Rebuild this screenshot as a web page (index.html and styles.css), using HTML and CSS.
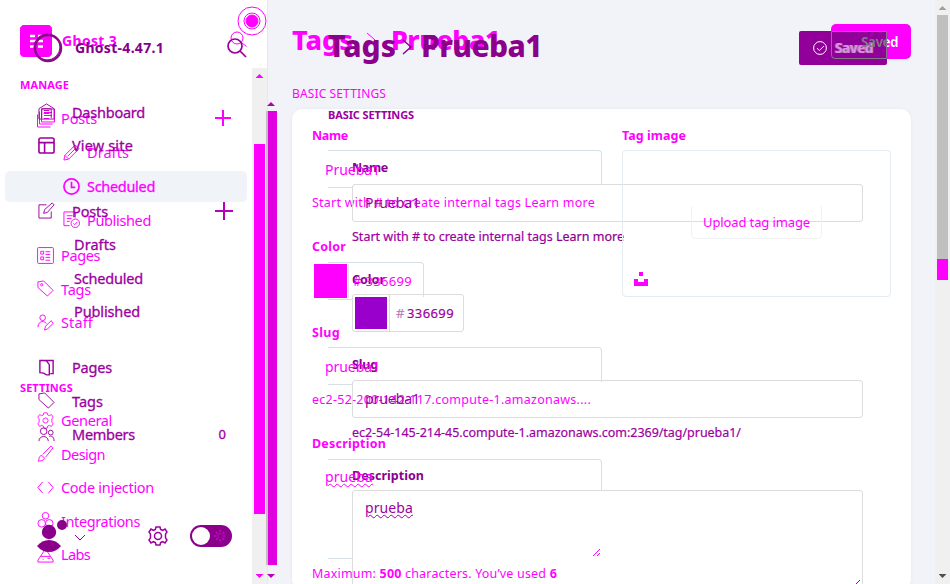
FILE: index.html
```html
<!DOCTYPE html>
<html lang="en">
<head>
<meta charset="utf-8">
<title>Tags - Prueba1</title>
<link rel="stylesheet" href="styles.css">
</head>
<body>
<div class="stage">
  <section class="layer old">
    <aside class="sidebar">
      <header class="brand">
        <svg class="logo" viewBox="0 0 32 32"><rect width="32" height="32" rx="5" fill="#f0f"/><path d="M10 11h5M18 11h5M10 16h13M10 21.500h6M18 21.500h5" stroke="#fff" stroke-width="2.500"/></svg>
        <b data-w="55">Ghost 3</b>
        <svg class="find" viewBox="0 0 20 20"><circle cx="8" cy="8" r="6"/><path d="M12.500 12.500l5 4"/></svg>
      </header>
      <div class="side-body">
        <nav class="nav-old">
          <h4 class="manage"><span data-w="49">MANAGE</span></h4>
          <a class="lead"><svg viewBox="0 0 18 20"><path d="M4.500 1.500h13v13h-13zM2.500 4v12.500h13M.5 7v12.500h13M7 5h8M7 8h8M7 11h5"/></svg><span data-w="36">Posts</span><i class="plus"></i></a>
          <a class="sub first"><svg viewBox="0 0 18 18"><path d="M1 17l1-5L13 1l4 4L6 16zM11 3l4 4M2 12l4 4M5 13l8-8"/></svg><span data-w="42">Drafts</span></a>
          <a class="sub current"><svg class="clock" viewBox="0 0 18 18"><circle cx="9" cy="9" r="8"/><path d="M9 4v6h4"/></svg><span data-w="68">Scheduled</span></a>
          <a class="sub"><svg viewBox="0 0 18 18"><path d="M7 15.500H1V1h12v6M4 5h6M4 8h5M4 11h3"/><circle cx="13" cy="13" r="4.500"/><path d="M11 13l1.500 1.500 2.500-3"/></svg><span data-w="64">Published</span></a>
          <a class="gap"><svg viewBox="0 0 18 18"><rect x=".6" y=".6" width="16.800" height="16.800" rx="1"/><path d="M4 4.500h3v3H4zM4 10.500h3v3H4zM9 5h5M9 8h5M9 11h5M9 14h5"/></svg><span data-w="39">Pages</span></a>
          <a><svg viewBox="0 0 18 18"><path d="M1 2l6-1 10 10-6 6L1 8z"/><circle cx="5" cy="5" r="1.200"/></svg><span data-w="30">Tags</span></a>
          <a><svg viewBox="0 0 18 18"><circle cx="6" cy="4" r="3"/><path d="M1 14c0-4 2-5 4-6 3 0 4 1 5 2M8 17l1-4 6-6 2 3-6 6z"/></svg><span data-w="32">Staff</span></a>
          <h4 class="settings"><span data-w="53">SETTINGS</span></h4>
          <a><svg viewBox="0 0 20 20"><path d="M8 1h4l.6 2.500 2 .8L17 3l2 3-1.500 2.200v3.600L19 14l-2 3-2.400-1.300-2 .8L12 19H8l-.6-2.500-2-.8L3 17l-2-3 1.500-2.200V8.200L1 6l2-3 2.400 1.300 2-.8z"/><circle cx="10" cy="10" r="3"/></svg><span data-w="51">General</span></a>
          <a><svg viewBox="0 0 18 18"><path d="M1 17c2-1 0-5 4-6l3 3c-1 3-5 3-7 3zM6 10l9-9 2 2-8 10"/></svg><span data-w="44">Design</span></a>
          <a><svg viewBox="0 0 18 18"><path d="M6 3L1 9l5 6M12 3l5 6-5 6"/></svg><span data-w="93">Code injection</span></a>
          <a><svg viewBox="0 0 18 18"><circle cx="9" cy="4" r="3.500"/><circle cx="5" cy="12" r="4"/><circle cx="13" cy="12" r="4"/></svg><span data-w="79">Integrations</span></a>
          <a><svg viewBox="0 0 18 18"><path d="M6 1h6M7 1v5L1 15v2h16v-2l-6-9V1M4 11h10M6 14h1M11 13h3"/></svg><span data-w="29">Labs</span></a>
        </nav>
        <div class="rail inner-rail"><i class="up"></i><i class="thumb"></i><i class="down"></i></div>
      </div>
    </aside>
    <main class="main">
      <header class="top">
        <h1><span data-w="61">Tags</span><svg viewBox="0 0 10 16"><path d="M1 1l8 7-8 7"/></svg><span data-w="109">Prueba1</span></h1>
        <div class="saved"><span class="saved-text" data-w="37">Saved</span></div>
      </header>
      <h2><span data-w="94">BASIC SETTINGS</span></h2>
      <div class="panel">
        <div class="fields">
          <label><span data-w="36">Name</span></label>
          <div class="box"><span data-w="55">Prueba1</span></div>
          <p><span data-w="283">Start with # to create internal tags Learn more</span></p>
          <label class="mid"><span data-w="34">Color</span></label>
          <div class="box color"><i class="swatch"></i><span data-w="59"># 336699</span></div>
          <label class="low"><span data-w="28">Slug</span></label>
          <div class="box"><span data-w="55">prueba1</span></div>
          <p><span data-w="279">ec2-52-200-142-117.compute-1.amazonaws....</span></p>
          <label class="mid"><span data-w="74">Description</span></label>
          <div class="box area"><span class="wavy" data-w="48">prueba</span><svg class="grip" viewBox="0 0 9 9"><path d="M1 8l7-7M5 8l3-3"/></svg></div>
          <p><span data-w="245">Maximum: <b>500</b> characters. You’ve used <b>6</b></span></p>
        </div>
        <div class="image-col">
          <label><span data-w="64">Tag image</span></label>
          <div class="drop">
            <div class="upload"><span data-w="107">Upload tag image</span></div>
            <svg class="unsplash" viewBox="0 0 14 14"><path d="M5 0h4v4H5zM0 7h4v3h6V7h4v7H0z" fill="#f0f"/></svg>
          </div>
        </div>
      </div>
    </main>
    <div class="rail page-rail"><i class="up"></i><i class="thumb"></i><i class="rest"></i><i class="down"></i></div>
  </section>

  <section class="layer new">
    <aside class="sidebar">
      <header class="brand">
        <svg class="logo" viewBox="0 0 32 32"><circle cx="16" cy="16" r="13" stroke="#80107f" stroke-width="2.500"/><circle cx="15" cy="15" r="13" stroke="#a000a0" stroke-width="1"/></svg>
        <b data-w="89">Ghost-4.47.1</b>
        <svg class="find" viewBox="0 0 20 20"><circle cx="8" cy="8" r="7"/><path d="M13 13l6 6"/></svg>
      </header>
      <nav class="nav-new">
        <a><svg viewBox="0 0 18 18"><path d="M1 17V6l8-5 8 5v11zM4 16V6h10v10M6 8h6M6 11h6"/></svg><span data-w="73">Dashboard</span></a>
        <a><svg class="bold" viewBox="0 0 18 18"><rect x="1" y="1" width="16" height="16" rx="2"/><path d="M1 6h16M7 6v11"/></svg><span data-w="61">View site</span></a>
        <a class="posts"><svg viewBox="0 0 18 18"><path d="M9 3H1v14h13v-7M6 12l1-4 8-7 2 2-7 8z"/></svg><span data-w="36">Posts</span><i class="plus"></i></a>
        <a class="sub"><span data-w="42">Drafts</span></a>
        <a class="sub"><span data-w="69">Scheduled</span></a>
        <a class="sub"><span data-w="66">Published</span></a>
        <a class="pages"><svg viewBox="0 0 18 18"><path class="heavy" d="M3 1.500h13v14h-3M2 1.500v13l4 .5 3 1.800h3V6L9 2z"/></svg><span data-w="40">Pages</span></a>
        <a><svg viewBox="0 0 18 18"><path d="M1 2l6-1 10 10-6 6L1 8z"/></svg><span data-w="31">Tags</span></a>
        <a><svg viewBox="0 0 18 18"><circle cx="6" cy="5.500" r="3.500"/><path d="M1 16c0-6 9-7 10 0"/><circle cx="13.500" cy="7" r="2.500"/><path d="M12 11c3-1 5 1 5 5"/></svg><span data-w="63">Members</span><em>0</em></a>
      </nav>
      <footer class="foot">
        <svg class="person" viewBox="0 0 32 34"><circle cx="12" cy="14" r="7.200"/><path d="M0 28q5-6 12-6t12 6q-5 6-12 6t-12-6z"/><circle cx="25" cy="7" r="5"/></svg>
        <svg class="caret" viewBox="0 0 12 7"><path d="M1 1l5 5 5-5"/></svg>
        <svg class="gear" viewBox="0 0 20 20"><path d="M8 1h4l.6 2.500 2 .8L17 3l2 3-1.500 2.200v3.600L19 14l-2 3-2.400-1.300-2 .8L12 19H8l-.6-2.500-2-.8L3 17l-2-3 1.500-2.200V8.200L1 6l2-3 2.400 1.300 2-.8z"/><circle cx="10" cy="10" r="3.500"/></svg>
        <svg class="toggle" viewBox="0 0 42 22"><rect width="42" height="22" rx="11" fill="#8b008b"/><circle cx="11" cy="11" r="9" fill="#fff"/><path d="M30 5v12M24 11h12M26 7l8 8M34 7l-8 8" stroke="#d000d0" stroke-width="1.500" stroke-dasharray="2 1"/><circle cx="30" cy="11" r="2" fill="#8b008b"/></svg>
      </footer>
    </aside>
    <div class="slim"><i class="up"></i><i class="thumb"></i><i class="down"></i></div>
    <main class="main">
      <header class="top">
        <h1><span data-w="68">Tags</span><svg viewBox="0 0 10 16"><path d="M1 1l8 7-8 7"/></svg><span data-w="121">Prueba1</span></h1>
        <div class="saved"><i class="overlap"></i><svg viewBox="0 0 14 14"><circle cx="7" cy="7" r="6.400"/><path d="M4 7l2.300 2.500L11 5"/></svg><span data-w="38">Saved</span></div>
      </header>
      <div class="form">
        <h2><span data-w="86">BASIC SETTINGS</span></h2>
        <div class="fields">
          <label class="first"><span data-w="36">Name</span></label>
          <div class="box"><span data-w="55">Prueba1</span></div>
          <p><span data-w="272">Start with # to create internal tags <strong>Learn more</strong></span></p>
          <label class="mid"><span data-w="33">Color</span></label>
          <div class="box color"><i class="swatch"></i><small>#</small><span data-w="47">336699</span></div>
          <label class="low"><span data-w="26">Slug</span></label>
          <div class="box"><span data-w="55">prueba1</span></div>
          <p><span data-w="389">ec2-54-145-214-45.compute-1.amazonaws.com:2369/tag/prueba1/</span></p>
          <label class="mid"><span data-w="72">Description</span></label>
          <div class="box area"><span class="wavy" data-w="48">prueba</span><svg class="grip" viewBox="0 0 9 9"><path d="M1 8l7-7M5 8l3-3"/></svg></div>
        </div>
      </div>
    </main>
  </section>
  <svg class="beacon" viewBox="0 0 30 30"><circle cx="15" cy="15" r="14"/><circle cx="15" cy="15" r="8"/><circle cx="15" cy="15" r="6" fill="#f0f"/></svg>
</div>
<script src="fit.js"></script>
</body>
</html>
```
FILE: styles.css
```css
* { box-sizing: border-box; }
body {
  margin: 0;
  width: 950px;
  height: 584px;
  overflow: hidden;
  background: #f2f3f8;
  font-family: "Noto Sans", "Open Sans", sans-serif;
  font-size: 14.5px;
  line-height: 20px;
}
h1, h2, h4, p { margin: 0; }
i, em { font-style: normal; }
svg { display: block; flex: none; fill: none; stroke: currentColor; stroke-width: 1; }
[data-w] { display: inline-block; white-space: nowrap; }

.stage { display: grid; position: relative; height: 584px; overflow: hidden; }
.layer { grid-area: 1 / 1; display: flex; height: 584px; min-width: 0; }
.old { color: #f0f; }
.new { color: #9c009f; }
.sidebar { display: flex; flex-direction: column; flex: none; }
.old .sidebar { width: 268px; background: #fff; border-right: 1px solid #e6e8ee; }
.new .sidebar { width: 266px; }

.brand { display: flex; align-items: center; }
.brand b { font-size: 14px; }
.logo { width: 32px; height: 32px; }
.find { width: 20px; height: 20px; margin-left: auto; }
.old .brand { height: 68px; padding: 0 18px 0 20px; }
.old .logo { margin-top: 14px; }
.old .brand b { margin: 14px 0 0 10px; }
.old .find { margin-top: 12px; }
.new .brand { height: 95px; padding: 0 19px 0 32px; }
.new .brand b { margin-left: 11px; color: #85008a; }
.new .find { stroke-width: 1.700; }

.side-body { display: flex; flex: 1; }
.nav-old { flex: 1; }
.nav-old h4 { font-size: 11px; padding-left: 20px; }
.nav-old .manage { height: 33px; line-height: 34px; }
.nav-old .settings { height: 64.500px; padding-top: 39px; }
.nav-old a, .nav-new a { display: flex; align-items: center; height: 33.5px; }
.nav-old a { padding-left: 37px; gap: 7px; }
.nav-old a svg { width: 17px; height: 17px; }
.nav-old .lead svg { width: 18px; height: 21px; margin-right: -1px; }
.nav-old .sub { padding-left: 63px; }
.nav-old .first { margin-top: 1px; }
.nav-old .gap { margin-top: 2px; }
.nav-old .current { height: 31px; margin: 1.500px 5px; padding-left: 58px; background: #f0f4f9; border-radius: 5px; -webkit-text-stroke: .3px; }
.clock { stroke-width: 1.800; }
.plus { width: 16px; height: 16px; margin-left: auto; background: linear-gradient(currentColor 0 0) center / 100% 2px no-repeat, linear-gradient(currentColor 0 0) center / 2px 100% no-repeat; }
.old .plus { margin-right: 21px; }
.new .plus { width: 18px; height: 18px; margin-right: 33px; color: #b800bc; }

.nav-new { height: 421px; -webkit-text-stroke: .3px; }
.nav-new a { padding-left: 38px; gap: 17px; }
.nav-new svg { width: 17px; height: 17px; }
.nav-new .bold { stroke-width: 1.700; }
.nav-new .heavy { stroke-width: 1.500; }
.nav-new .posts { margin-top: 32px; }
.nav-new .sub { padding-left: 74px; }
.nav-new .pages { margin-top: 22.500px; }
.nav-new em { margin-left: auto; padding-right: 40px; font-size: 13px; }
.foot { display: flex; align-items: flex-start; height: 68px; padding: 2px 0 0 37px; }
.person { width: 32px; height: 34px; fill: #8b008b; stroke: none; }
.caret { width: 12px; height: 7px; margin: 16px 0 0 5px; }
.gear { width: 20px; height: 20px; margin: 8px 0 0 62px; stroke-width: 1.500; }
.toggle { width: 42px; height: 22px; margin: 7px 0 0 22px; stroke: none; }

.rail { display: flex; flex-direction: column; align-items: center; width: 15px; background: #f0f0f0; }
.up, .down { width: 8px; height: 4px; background: currentColor; }
.up { clip-path: polygon(50% 0, 100% 100%, 0 100%); }
.down { clip-path: polygon(0 0, 100% 0, 50% 100%); }
.inner-rail .up { margin-top: 6px; }
.inner-rail .thumb { width: 11px; height: 370px; margin-top: 66px; background: #f0f; }
.inner-rail .down { margin-top: 60px; }
.page-rail { flex: none; }
.page-rail .up { margin-top: 6px; background: #a0a0a0; }
.page-rail .thumb { width: 11px; height: 244px; margin-top: 5px; background: #c0c0c0; }
.page-rail .rest { width: 11px; height: 21px; background: #f0f; }
.page-rail .down { margin-top: 294px; background: #505050; }
.slim { width: 11px; padding-top: 102px; }
.slim .up, .slim .down { display: block; margin-left: 1px; background: #b000b0; }
.slim .thumb { display: block; width: 11px; height: 454px; margin: 5px 0 9px; background: #e000e0; border-left: 2px solid #c0c0c0; }

.main { flex: 1; min-width: 0; }
.old .main { padding: 0 24px; }
.top { display: flex; align-items: flex-start; justify-content: space-between; }
h1 { display: flex; align-items: center; line-height: 40px; font-weight: 800; }
h1 svg { width: 10px; height: 16px; }
.old .top { height: 79px; padding-top: 20px; }
.old h1 { font-size: 27px; }
.old h1 svg { margin: 0 15px 0 13px; }
.new .top { height: 100px; padding-top: 26px; }
.new h1 { font-size: 30px; color: #8b008b; }
.new h1 svg { margin: 2px 9px 0 6px; stroke-width: 1.500; }
.saved { display: flex; align-items: center; font-size: 13.500px; font-weight: 700; }
.old .saved { width: 80px; height: 35px; margin-top: 4px; padding-left: 30px; border-radius: 5px; background: #f0f; }
.saved-text { position: relative; z-index: 2; color: transparent; background: linear-gradient(90deg, #85758c 26px, #fff 26px); -webkit-background-clip: text; background-clip: text; }
.new .saved { position: relative; width: 88px; height: 34px; margin-top: 5px; padding-left: 14px; gap: 8px; border-radius: 2px; background: #92009a; color: #e58ae9; text-shadow: 1px 0 #8b7790, -1px 0 #8b7790; }
.new .saved svg { width: 14px; height: 14px; stroke: #fff; }
.overlap { position: absolute; left: 32px; top: 0; width: 56px; height: 28px; border: 1px solid #857888; border-radius: 0 0 0 4px; }
.new .main { flex: none; width: 658px; padding: 0 48px 0 51px; }

h2 { font-size: 12px; font-weight: 400; }
.old h2 { height: 30px; line-height: 29px; }
.new h2 { height: 30px; line-height: 30px; font-size: 11px; font-weight: 700; }
.panel { display: flex; gap: 20px; height: 480px; padding: 11px 20px 0; border-radius: 10px; background: #fff; box-shadow: 0 0 3px #e4e6ed; }
.old .fields { width: 290px; }
.fields { display: grid; font-size: 13px; }
.old .fields { grid-template-rows: 30px 38px 28px 46px 38px 47px 38px 28px 46px 100px 28px; }
.new .fields { grid-template-rows: 54px 38px 30px 42px 38px 48px 38px 30px 42px 110px; width: 511px; margin-left: 24px; }
label { display: flex; align-items: center; font-size: 12.500px; font-weight: 700; }
p { display: flex; align-items: center; font-size: 12.500px; }
.old label { padding-top: 2px; }
.old p { padding-top: 2px; }
.old .mid { padding-top: 16px; }
.old .low { padding-top: 19px; }
.new .first { padding-top: 22px; }
.new .mid { padding-top: 13px; }
.new .low { padding-top: 18px; }
.new label { color: #8b008f; }
.new p { -webkit-text-stroke: .2px; }
.new p strong { font-weight: 400; color: #8b008b; }
.box { display: flex; align-items: center; padding-left: 13px; font-size: 14px; }
.old .box { position: relative; padding-top: 2px; background: linear-gradient(#d5e0e8 0 0) 16px 100% / 24px 1px no-repeat; }
.old .box::before { content: ""; position: absolute; inset: 0 0 3px 16px; border: solid #d5e0e8; border-width: 1px 1px 0 0; border-radius: 0 4px 0 0; }
.new .box { padding-left: 12px; border: 1px solid #dcdcdc; border-radius: 3px; }
.old .box.color, .new .box.color { width: 112px; padding: 0; font-size: 13px; }
.old .color .swatch { width: 35px; height: 34px; margin-left: 2px; background: #f0f; border-right: 1px solid #d5e0e8; box-shadow: inset -1px 0 #fff; }
.old .color span { margin-left: 4px; }
.new .color { -webkit-text-stroke: .2px; }
.new .color .swatch { width: 32px; height: 32px; margin-left: 2px; background: #90c; }
.new .color small { margin-left: 2px; padding-left: 6px; width: 18px; line-height: 36px; border-left: 1px solid #dcdcdc; color: #bc80c0; font-size: 13px; }
.box.area { align-items: flex-start; }
.old .area { padding-top: 8px; }
.old .area::before { bottom: 69px; }
.new .area { padding-top: 7px; position: relative; }
.wavy { text-decoration: underline wavy 1px; text-underline-offset: 1px; }
.grip { position: absolute; width: 9px; height: 9px; right: 1px; bottom: 2px; }
.new .grip { bottom: 11px; }
.image-col { width: 269px; }
.image-col label { height: 30px; }
.drop { display: grid; place-items: center; position: relative; height: 147px; border: 1px solid #e4ebf1; border-radius: 4px; }
.upload { display: grid; place-items: center; width: 131px; height: 35px; margin-top: -4px; border: 1px solid #f0f1f3; border-top-color: #fff; border-radius: 5px; font-size: 13px; }
.unsplash { position: absolute; left: 11px; bottom: 10px; width: 14px; height: 14px; stroke: none; }
.beacon { position: absolute; left: 237px; top: 6px; width: 30px; height: 30px; color: #f0f; }
```
FILE: fit.js
```js
// Track each label so that its text fills the width given in data-w.
document.querySelectorAll('[data-w]').forEach(function (el) {
  var gap = Number(el.dataset.w) - el.getBoundingClientRect().width;
  el.style.letterSpacing = gap / el.textContent.length + 'px';
});
```
